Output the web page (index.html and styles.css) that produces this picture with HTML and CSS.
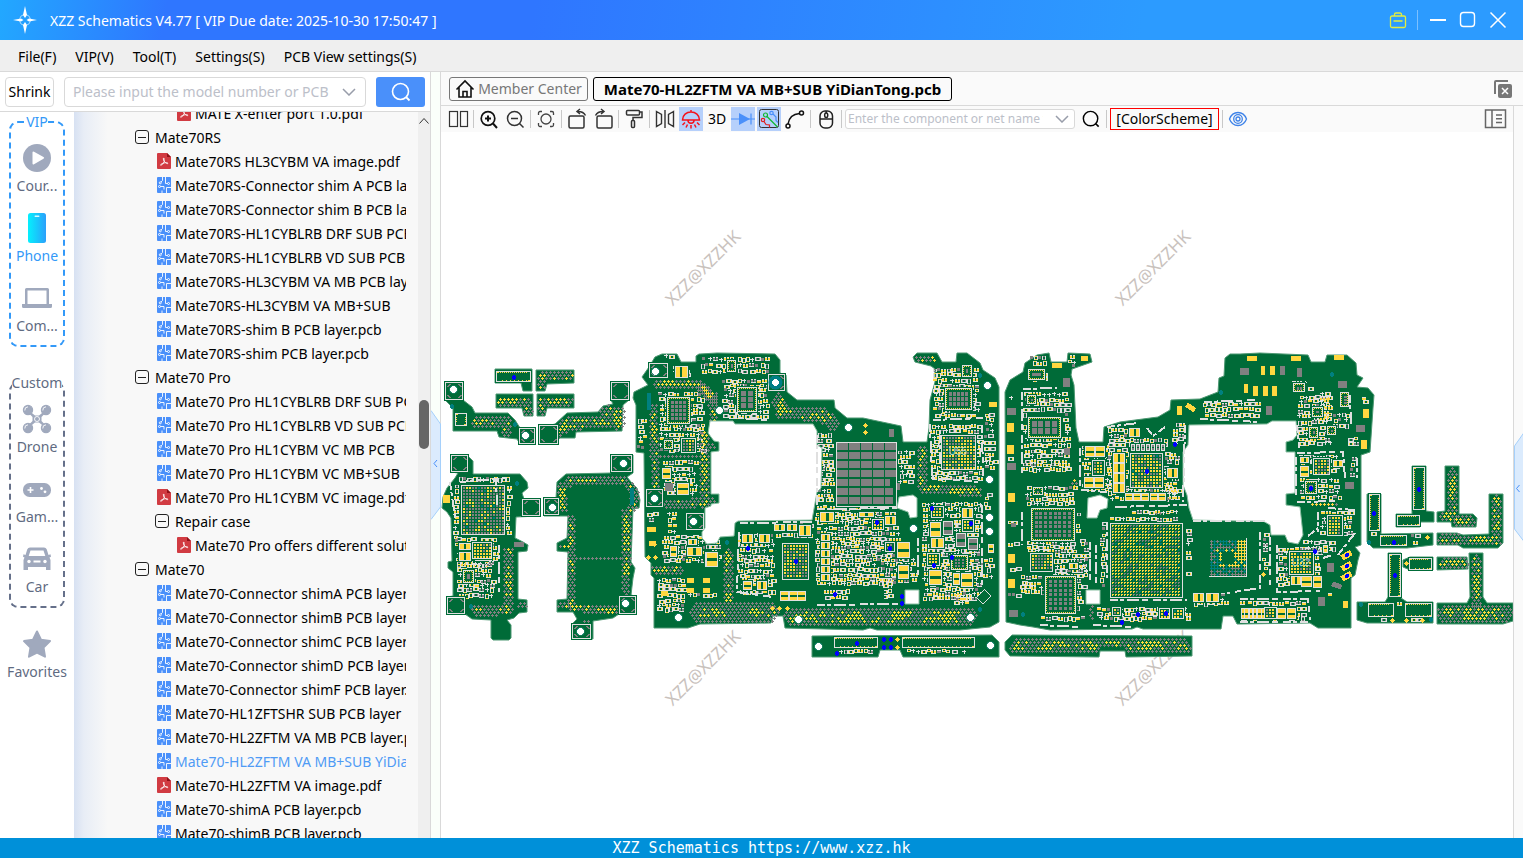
FILE: index.html
```html
<!DOCTYPE html>
<html lang="en">
<head>
<meta charset="utf-8">
<title>XZZ Schematics V4.77</title>
<link rel="stylesheet" href="styles.css">
</head>
<body>
<svg class="sprite" aria-hidden="true">
  <symbol id="i-pcb" viewBox="0 0 14 16">
    <rect width="14" height="16" rx="1" fill="#4a90fa"/>
    <g fill="none" stroke="#fff" stroke-width=".9">
      <path d="M5.500 0v3.500l-1.500 1.500M8.500 0v6.500h2M3.500 9.500h3.500v3M9.500 16v-5.500h4.500M5 16v-2.500"/>
      <circle cx="3.300" cy="5.800" r="1"/><circle cx="11.500" cy="6.500" r="1"/><circle cx="2.500" cy="9.500" r="1"/>
    </g>
  </symbol>
  <symbol id="i-pdf" viewBox="0 0 14 16">
    <path d="M1 0h9l4 4v11a1 1 0 0 1-1 1H1a1 1 0 0 1-1-1V1a1 1 0 0 1 1-1z" fill="#d13b42"/>
    <path d="M10 0l4 4h-4z" fill="#8f1218"/>
    <path d="M6.800 5c-.8 0-.4 2 .4 3.400C6.500 10 5 12.300 3.800 12.300c-1-.3 1-1.900 3.400-2.400 2-.4 3.800-.2 3.700.5-.2.700-2-.1-3.300-1.700C6.900 7.600 7.200 5 6.800 5z" fill="none" stroke="#fff" stroke-width=".9"/>
  </symbol>
  <symbol id="i-search" viewBox="0 0 20 20">
    <circle cx="9.500" cy="9.500" r="8" fill="none" stroke="currentColor" stroke-width="1.600"/>
    <path d="M15 15l3.500 3.500" stroke="currentColor" stroke-width="1.800"/>
  </symbol>
  <symbol id="i-chev" viewBox="0 0 14 8"><path d="M1 1l6 6 6-6" fill="none" stroke="currentColor" stroke-width="1.500"/></symbol>
</svg>

<header class="titlebar">
  <svg class="logo" width="24" height="28" viewBox="0 0 24 28">
    <circle cx="12" cy="14" r="5.500" fill="none" stroke="#a9dcff" stroke-width="1" stroke-dasharray="6 2.600" stroke-dashoffset="-1"/>
    <path d="M12 0l2 9-2 3-2-3zM12 28l2-9-2-3-2 3zM0 14l8-1.500 2.500 1.500L8 15.500zM24 14l-8-1.500-2.500 1.500 2.500 1.500z" fill="#fff"/>
  </svg>
  <h1 class="title">XZZ Schematics V4.77 [ VIP Due date: 2025-10-30 17:50:47 ]</h1>
  <div class="window-tools">
    <button class="win" aria-label="Toolbox"><svg width="18" height="18" viewBox="0 0 18 18" fill="none" stroke="#e3ee3f" stroke-width="1.300"><rect x="1.500" y="5" width="15" height="11.500" rx="1.500"/><path d="M5.500 5V3.500a1.500 1.500 0 0 1 1.500-1.500h4a1.500 1.500 0 0 1 1.500 1.500V5M4.500 10h9"/></svg></button>
    <span class="win-line"></span>
    <button class="win" aria-label="Minimize"><svg width="18" height="18" viewBox="0 0 18 18"><path d="M1 9h16" stroke="#fff" stroke-width="2"/></svg></button>
    <button class="win" aria-label="Maximize"><svg width="18" height="18" viewBox="0 0 18 18"><rect x="1.500" y="1.500" width="14" height="14" rx="3" fill="none" stroke="#fff" stroke-width="1.400"/></svg></button>
    <button class="win" aria-label="Close"><svg width="18" height="18" viewBox="0 0 18 18"><path d="M1.500 1.500l15 15M16.500 1.500l-15 15" stroke="#fff" stroke-width="1.500"/></svg></button>
  </div>
</header>

<nav class="menubar">
  <button>File(F)</button><button>VIP(V)</button><button>Tool(T)</button><button>Settings(S)</button><button>PCB View settings(S)</button>
</nav>

<main class="work">
  <section class="side">
    <form class="finder">
      <button type="button" class="shrink">Shrink</button>
      <div class="combo">
        <input type="text" aria-label="Model number or PCB" placeholder="Please input the model number or PCB">
        <button type="button" class="drop" aria-label="Show history"><svg width="14" height="8"><use href="#i-chev"/></svg></button>
      </div>
      <button type="button" class="go" aria-label="Search"><svg width="20" height="20"><use href="#i-search"/></svg></button>
    </form>
    <div class="side-body">
      <nav class="cats">
        <fieldset class="cat-group vip">
          <legend>VIP</legend>
          <button class="cat"><svg width="30" height="30" viewBox="0 0 30 30"><circle cx="15" cy="15" r="14" fill="#a0a9bd"/><path d="M10.500 9.500v11a1 1 0 0 0 1.500.8l9.500-5.500a1 1 0 0 0 0-1.700L12 8.700a1 1 0 0 0-1.500.8z" fill="#fff"/></svg><span>Cour...</span></button>
          <button class="cat on"><svg width="30" height="30" viewBox="0 0 30 30"><defs><linearGradient id="ph"><stop offset="0" stop-color="#05f0fd"/><stop offset="1" stop-color="#2ba0fb"/></linearGradient></defs><rect x="6" y="0" width="18" height="30" rx="2.500" fill="url(#ph)"/><rect x="12.500" y="2.500" width="5" height="1.500" rx=".7" fill="#d8fbff"/></svg><span>Phone</span></button>
          <button class="cat"><svg width="30" height="30" viewBox="0 0 30 30"><path d="M3 6.500A1.500 1.500 0 0 1 4.500 5h21A1.500 1.500 0 0 1 27 6.500V21h3v2.500a1.500 1.500 0 0 1-1.500 1.500h-27A1.500 1.500 0 0 1 0 23.500V21h3zM5.500 7.500V21h19V7.500z" fill="#a0a9bd" fill-rule="evenodd"/></svg><span>Com...</span></button>
        </fieldset>
        <fieldset class="cat-group custom">
          <legend>Custom</legend>
          <button class="cat"><svg width="30" height="30" viewBox="0 0 30 30" fill="#a0a9bd"><path d="M5 5l8 6.500h4L25 5l.8 1.500L19.500 13v4l6.300 6.500L25 25l-8-6.500h-4L5 25l-.8-1.500L10.500 17v-4L4.200 6.500z"/><g stroke="#a0a9bd" stroke-width="1.200"><circle cx="6" cy="6" r="4.600"/><circle cx="24" cy="6" r="4.600"/><circle cx="6" cy="24" r="4.600"/><circle cx="24" cy="24" r="4.600"/></g><g fill="none" stroke="#fff" stroke-width=".9"><path d="M2.800 6.500A3.400 3.400 0 0 1 6 2.800M20.800 6.500A3.400 3.400 0 0 1 24 2.800M2.800 24.500A3.400 3.400 0 0 1 6 20.800M20.800 24.500A3.400 3.400 0 0 1 24 20.800"/><circle cx="15" cy="15" r="2.500"/></g></svg><span>Drone</span></button>
          <button class="cat"><svg width="30" height="30" viewBox="0 0 30 30"><rect x="1" y="9" width="28" height="14" rx="6.500" fill="#a0a9bd"/><path d="M8.500 13v6M5.500 16h6" stroke="#fff" stroke-width="1.600"/><circle cx="19.500" cy="14.500" r="1.400" fill="#fff"/><circle cx="23" cy="17.800" r="1.400" fill="#fff"/></svg><span>Gam...</span></button>
          <button class="cat"><svg width="30" height="30" viewBox="0 0 30 30"><path d="M8 3.500h14a3 3 0 0 1 2.700 1.800L26.500 11l2-.8.500 2.600-1.500.7 1 2.500V26h-4.500v-3h-18v3H1.500V16l1-2.500-1.500-.7.500-2.600 2 .8 1.800-5.700A3 3 0 0 1 8 3.500zM8.500 6.500L6.700 12h16.600l-1.800-5.500z" fill="#a0a9bd" fill-rule="evenodd"/><circle cx="7" cy="17.500" r="1.700" fill="#fff"/><circle cx="23" cy="17.500" r="1.700" fill="#fff"/><path d="M11.500 17.500h7" stroke="#fff" stroke-width="2"/></svg><span>Car</span></button>
        </fieldset>
        <button class="cat fav"><svg width="30" height="30" viewBox="0 0 30 30"><path d="M15 2.500l4 8.200 9 1.400-6.500 6.400 1.500 9.200-8-4.200-8 4.200 1.500-9.200L2 12.100l9-1.400z" fill="#a0a9bd" stroke="#a0a9bd" stroke-width="2" stroke-linejoin="round"/></svg><span>Favorites</span></button>
      </nav>
      <div class="tree" id="tree"></div>
      <div class="vscroll">
        <svg width="12" height="8" viewBox="0 0 12 8"><path d="M1.500 6.500L6 1.500l4.500 5" fill="none" stroke="#333" stroke-width="1"/></svg>
        <span class="thumb"></span>
      </div>
    </div>
  </section>

  <div class="splitter">
    <button class="handle" aria-label="Collapse left panel"><svg width="10" height="110" viewBox="0 0 10 110"><path d="M0 .5L9.500 14v83L0 109.500" fill="#dbebfd" stroke="#a5d0fb"/><path d="M6 50l-3 3.500L6 57" fill="none" stroke="#4a90fa"/></svg></button>
  </div>

  <section class="viewer">
    <div class="tabs">
      <button class="tab home"><svg width="20" height="20" viewBox="0 0 20 20" fill="none" stroke="#111" stroke-width="1.600"><path d="M1.500 10.500L10 2l8.500 8.500M4 8.500V18h12V8.500M8 18v-5.500h4V18"/></svg><span>Member Center</span></button>
      <button class="tab current">Mate70-HL2ZFTM VA MB+SUB YiDianTong.pcb</button>
      <button class="close-all" aria-label="Close all tabs"><svg width="20" height="20" viewBox="0 0 20 20"><path d="M2 15V3a1 1 0 0 1 1-1h12" fill="none" stroke="#777" stroke-width="2"/><rect x="5" y="5" width="14" height="14" rx="2" fill="#777"/><path d="M9 9l6 6M15 9l-6 6" stroke="#fff" stroke-width="1.500"/></svg></button>
    </div>
    <div class="viewer-body">
      <div class="stage">
        <div class="toolbar">
          <button class="tool" aria-label="Split view"><svg width="24" height="24" viewBox="0 0 24 24" fill="none" stroke="#333" stroke-width="1.200"><rect x="3.500" y="4.500" width="8" height="15"/><rect x="14.500" y="4.500" width="7" height="15"/></svg></button>
          <i class="sep"></i>
          <button class="tool" aria-label="Zoom in"><svg width="24" height="24" viewBox="0 0 24 24" fill="none" stroke="#111" stroke-width="1.700"><circle cx="11" cy="11.500" r="6.800"/><path d="M16 16.500l4 4.500M11 8.500v6M8 11.500h6" stroke-width="2"/></svg></button>
          <button class="tool" aria-label="Zoom out"><svg width="24" height="24" viewBox="0 0 24 24" fill="none" stroke="#333" stroke-width="1.500"><circle cx="11.500" cy="11.500" r="7"/><path d="M16.500 16.500l4 4M8 11.500h7"/></svg></button>
          <i class="sep"></i>
          <button class="tool" aria-label="Fit"><svg width="24" height="24" viewBox="0 0 24 24" fill="none" stroke="#444" stroke-width="1.300"><circle cx="12" cy="12" r="5"/><path d="M4.500 8V6a1.500 1.500 0 0 1 1.500-1.500h2M16 4.500h2A1.500 1.500 0 0 1 19.500 6v2M19.500 16v2a1.500 1.500 0 0 1-1.500 1.500h-2M8 19.500H6A1.500 1.500 0 0 1 4.500 18v-2"/></svg></button>
          <i class="sep"></i>
          <button class="tool" aria-label="Rotate left"><svg width="24" height="24" viewBox="0 0 24 24" fill="none" stroke="#333" stroke-width="1.500"><rect x="4" y="9" width="15" height="12" rx="1.500"/><path d="M12 4.500c4-.3 7 1 8.500 4M15 2l-3 2.500 3 2.500"/></svg></button>
          <button class="tool" aria-label="Rotate right"><svg width="24" height="24" viewBox="0 0 24 24" fill="none" stroke="#333" stroke-width="1.500"><rect x="6" y="9" width="15" height="12" rx="1.500"/><path d="M13 4.500C9 4.200 6 5.500 4.500 8.500M10 2l3 2.500L10 7"/></svg></button>
          <i class="sep"></i>
          <button class="tool" aria-label="Paint"><svg width="24" height="24" viewBox="0 0 24 24" fill="none" stroke="#333" stroke-width="1.500"><rect x="4.500" y="3.500" width="13" height="4.500" rx="1"/><path d="M17.500 5h2.500v5.500h-9v3"/><rect x="9.500" y="13.500" width="3" height="7" rx="1"/></svg></button>
          <i class="sep"></i>
          <button class="tool" aria-label="Mirror"><svg width="24" height="24" viewBox="0 0 24 24" fill="none" stroke="#333" stroke-width="1.400"><path d="M3.500 4.500l5 3v9l-5 3zM20.500 4.500l-5 3v9l5 3zM12 3v18"/></svg></button>
          <button class="tool lit" aria-label="Light"><svg width="24" height="24" viewBox="0 0 24 24" fill="none" stroke="#f5121b" stroke-width="1.500"><path d="M3.500 13c0-5 4-8 8.500-8s8.500 3 8.500 8zM12 3v2M9 13.500c0 3.500 6 3.500 6 0M6 15.500L3.500 18M8.500 17.500L7 20.500M12 18v3.500M15.500 17.500l1.500 3M18 15.500l2.500 2.500"/></svg></button>
          <button class="tool word">3D</button>
          <button class="tool lit" aria-label="Diode"><svg width="24" height="24" viewBox="0 0 24 24"><path d="M0 12h24M20 6.500v11" stroke="#4a90fa" stroke-width="1.200"/><path d="M8 6l11 6-11 6z" fill="#4a90fa"/></svg></button>
          <button class="tool lit" aria-label="Traces"><svg width="24" height="24" viewBox="0 0 24 24" fill="none" stroke-width="1.200"><rect x="2.500" y="2.500" width="19" height="18" rx="2" stroke="#333" stroke-width="1"/><g stroke="#10b830"><circle cx="8.500" cy="8" r="2"/><path d="M10 9.500L20.500 20"/></g><g stroke="#4a90fa"><circle cx="14.500" cy="6" r="1.700"/><path d="M16 7l3 3v3.500l2 2"/></g><g stroke="#e02020"><circle cx="6" cy="13" r="1.700"/><path d="M7 14.500l2 3 3.500.5v2.500"/></g></svg></button>
          <button class="tool" aria-label="Curve"><svg width="24" height="24" viewBox="0 0 24 24" fill="none" stroke="#111" stroke-width="1.500"><circle cx="18.500" cy="6" r="2"/><circle cx="5" cy="19" r="2"/><path d="M16.500 6.500C10 7 6 10.500 5 17"/></svg></button>
          <i class="sep"></i>
          <button class="tool" aria-label="Mouse"><svg width="24" height="24" viewBox="0 0 24 24" fill="none" stroke="#222" stroke-width="1.500"><rect x="6" y="4" width="12.500" height="17" rx="5"/><path d="M6 12h12.500M12.200 4v2"/><rect x="10.700" y="6" width="3" height="4.500" rx="1.500"/></svg></button>
          <i class="sep"></i>
          <div class="combo small">
            <input type="text" aria-label="Component or net name" placeholder="Enter the component or net name to search">
            <button type="button" class="drop" aria-label="Show history"><svg width="14" height="8"><use href="#i-chev"/></svg></button>
          </div>
          <button class="tool find" aria-label="Find"><svg width="20" height="20"><use href="#i-search"/></svg></button>
          <i class="sep"></i>
          <button class="scheme">[ColorScheme]</button>
          <i class="sep"></i>
          <button class="tool" aria-label="Visibility"><svg width="24" height="24" viewBox="0 0 24 24" fill="none" stroke="#3f83e8" stroke-width="1.300"><path d="M3.500 12C5 8 8.500 5.500 12 5.500S19 8 20.500 12c-1.500 4-5 6.500-8.500 6.500S5 16 3.500 12z"/><circle cx="12" cy="12" r="4.300"/><circle cx="12" cy="12" r="2"/></svg></button>
          <button class="tool panel" aria-label="Layer panel"><svg width="24" height="20" viewBox="0 0 24 20" fill="none" stroke="#666" stroke-width="1.500"><rect x="1.500" y="1" width="20" height="17.500"/><path d="M8 1v17.500M12 6h6M12 9.800h6M12 13.500h6"/></svg></button>
        </div>
        <svg class="board" id="board" viewBox="441 132 1072 706" shape-rendering="crispEdges"></svg>
      </div>
      <div class="rail">
        <button class="handle" aria-label="Expand right panel"><svg width="10" height="110" viewBox="0 0 10 110"><path d="M10 .5L.5 14v83l9.500 12.500" fill="#dbebfd" stroke="#a5d0fb"/><path d="M5.500 53l-3 3.500 3 3.500" fill="none" stroke="#4a90fa"/></svg></button>
      </div>
    </div>
  </section>
</main>

<footer class="foot">XZZ Schematics https://www.xzz.hk</footer>
<script src="app.js"></script>
</body>
</html>
```

FILE: styles.css
```css
* { box-sizing: border-box; }
body {
  margin: 0;
  height: 100vh;
  display: flex;
  flex-direction: column;
  overflow: hidden;
  background: #fff;
  color: #000;
  font: 14px/20px "Noto Sans", "Open Sans", sans-serif;
}
button, input {
  font: inherit;
  color: inherit;
  border: 0;
  padding: 0;
  margin: 0;
  background: none;
}
button { display: inline-flex; align-items: center; justify-content: center; }
svg { display: block; flex: none; }
.sprite { position: absolute; width: 0; height: 0; }

.titlebar {
  flex: none;
  height: 40px;
  display: flex;
  align-items: center;
  padding: 0 16px 0 13px;
  color: #fff;
  background: linear-gradient(100deg, #22a8ff 0, #2f76ff 11%, #2f76ff 35%, #2c9bff 75%, #2c9bff 100%);
}
.title { flex: 1; margin: 0 0 0 13px; padding-top: 2px; font-size: 14px; font-weight: 400; }
.window-tools { display: flex; align-items: center; gap: 12px; }
.win { width: 18px; height: 18px; }
.win-line { width: 1px; height: 20px; background: #7cc0ff; margin: 0 -1px 0 -2px; }

.menubar {
  flex: none;
  height: 32px;
  display: flex;
  gap: 19px;
  padding: 2px 18px 0;
  background: #efefef;
  border-bottom: 1px solid #d9d9d9;
}

.work { flex: 1; min-height: 0; display: flex; }
.side { flex: none; width: 431px; display: flex; flex-direction: column; border-right: 1px solid #d9d9d9; }
.finder {
  flex: none;
  height: 40px;
  display: flex;
  align-items: center;
  padding: 0 5px;
  border-bottom: 1px solid #d9d9d9;
}
.shrink { width: 49px; height: 30px; border: 1px solid #d9d9d9; border-radius: 4px; }
.combo {
  display: flex;
  align-items: center;
  height: 30px;
  width: 302px;
  margin: 0 10px;
  padding: 0 9px 0 8px;
  border: 1px solid #d9d9d9;
  border-radius: 4px;
  background: #fff;
}
.combo input { flex: 1; min-width: 0; outline: 0; }
.combo input::placeholder { color: #bcc0c9; opacity: 1; }
.drop { width: 14px; margin-left: 4px; color: #989daa; }
.go { width: 49px; height: 30px; border-radius: 3px; background: #4a90fa; color: #fff; }
.side-body { flex: 1; min-height: 0; display: flex; }

.cats { flex: none; width: 74px; overflow: hidden; color: #5f6b82; }
.cat-group { min-width: 0; margin: 0 9px 26px; padding: 0 0 3px; border: 2px dashed; border-radius: 9px; }
.cat-group legend { margin: 0 auto; padding: 0; line-height: 20px; }
.vip { border-color: #3399f8; }
.vip legend { color: #3399f8; }
.custom { border-color: #65708a; }
.cat { display: flex; flex-direction: column; width: 100%; height: 70px; padding-top: 11px; justify-content: flex-start; gap: 3px; white-space: nowrap; }
.on { color: #3399f8; }
.fav { margin-top: -16px; }

.tree {
  flex: 1;
  min-width: 0;
  overflow: hidden;
  padding-right: 12px;
  background: linear-gradient(90deg, #d7e1f2 0, #e8edf6 10px, #f8f8f8 34px);
}
.tree ul { list-style: none; margin: 0; padding: 0 0 0 20px; }
.tree > ul { margin-top: -11px; padding-left: 61px; }
.tree a, .tree .node { display: flex; align-items: center; height: 24px; color: inherit; text-decoration: none; white-space: nowrap; overflow: hidden; }
.tree a { margin-left: 2px; gap: 4px; }
.tree .node { gap: 6px; }
.tree span { padding-top: 2px; }
.tree .picked { color: #4f9bf5; }
.fold { width: 14px; height: 14px; border: 1px solid #222; border-radius: 3px; }
.fold::before { content: ""; width: 8px; height: 1px; background: #222; }
.vscroll { flex: none; width: 12px; background: #efefef; position: relative; padding-top: 5px; }
.thumb { position: absolute; top: 41%; left: 1px; right: 1px; margin-top: -10px; height: 49px; border-radius: 5px; background: #666; }

.splitter { flex: none; width: 10px; position: relative; background: #fafffa; border-right: 1px solid #d9d9d9; }
.handle { position: absolute; left: 0; z-index: 2; }
.splitter .handle { top: 338px; }
.rail .handle { top: 326px; }

.viewer { flex: 1; min-width: 0; display: flex; flex-direction: column; }
.tabs {
  flex: none;
  height: 34px;
  display: flex;
  align-items: center;
  gap: 5px;
  padding: 0 10px 0 8px;
  background: #fafafa;
  border-bottom: 1px solid #d9d9d9;
}
.tab { height: 24px; border: 1px solid #777; border-radius: 3px; background: #fafafa; }
.home { color: #777; padding: 0 5px; gap: 3px; width: 139px; }
.current { border-color: #000; color: #000; font-size: 15px; font-weight: 700; width: 359px; }
.close-all { margin-left: auto; }
.viewer-body { flex: 1; min-height: 0; display: flex; }
.stage { flex: 1; min-width: 0; display: flex; flex-direction: column; }
.toolbar { flex: none; height: 26px; display: flex; align-items: center; gap: 2px; padding: 0 5px; background: #fafafa; }
.tool { flex: none; width: 24px; height: 24px; }
.lit { background: #b6d0fb; }
.sep { flex: none; width: 3px; height: 18px; background: linear-gradient(90deg, transparent 1px, #c8c8c8 1px, #c8c8c8 2px, transparent 2px); }
.combo.small { width: 230px; height: 20px; margin: 0; padding: 0 5px 0 2px; font-size: 12px; border-radius: 3px; }
.small .drop { margin-left: 12px; }
.find { margin-left: 2px; }
.find svg { width: 18px; height: 18px; }
.scheme { width: 109px; height: 22px; border: 1px solid #f00; }
.panel { margin-left: auto; }
.board { flex: 1; min-height: 0; width: 100%; }
.rail { flex: none; width: 10px; position: relative; background: #fafafa; border-left: 1px solid #d9d9d9; }

.watermark { font: 17px "Noto Sans", sans-serif; fill: #c9c2bd; text-anchor: middle; }
.refdes { font: 10px "Liberation Sans", sans-serif; fill: #b8d8d0; text-anchor: middle; }

.foot {
  flex: none;
  height: 20px;
  background: #0090d9;
  color: #fff;
  text-align: center;
  font: 15px/20px "DejaVu Sans Mono", monospace;
}
```

FILE: app.js
```js
/* ---------- file tree ---------- */
const files = [
  { deep: ["MATE X-enter port 1.0.pdf"] },
  { name: "Mate70RS", items: [
    "Mate70RS HL3CYBM VA image.pdf",
    "Mate70RS-Connector shim A PCB layer.pcb",
    "Mate70RS-Connector shim B PCB layer.pcb",
    "Mate70RS-HL1CYBLRB DRF SUB PCB layer.pcb",
    "Mate70RS-HL1CYBLRB VD SUB PCB layer.pcb",
    "Mate70RS-HL3CYBM VA MB PCB layer.pcb",
    "Mate70RS-HL3CYBM VA MB+SUB",
    "Mate70RS-shim B PCB layer.pcb",
    "Mate70RS-shim PCB layer.pcb"] },
  { name: "Mate70 Pro", items: [
    "Mate70 Pro HL1CYBLRB DRF SUB PCB layer.pcb",
    "Mate70 Pro HL1CYBLRB VD SUB PCB layer.pcb",
    "Mate70 Pro HL1CYBM VC MB PCB",
    "Mate70 Pro HL1CYBM VC MB+SUB",
    "Mate70 Pro HL1CYBM VC image.pdf",
    { name: "Repair case", items: ["Mate70 Pro offers different solutions.pdf"] }] },
  { name: "Mate70", items: [
    "Mate70-Connector shimA PCB layer.pcb",
    "Mate70-Connector shimB PCB layer.pcb",
    "Mate70-Connector shimC PCB layer.pcb",
    "Mate70-Connector shimD PCB layer.pcb",
    "Mate70-Connector shimF PCB layer.pcb",
    "Mate70-HL1ZFTSHR SUB PCB layer",
    "Mate70-HL2ZFTM VA MB PCB layer.pcb",
    "Mate70-HL2ZFTM VA MB+SUB YiDianTong.pcb",
    "Mate70-HL2ZFTM VA image.pdf",
    "Mate70-shimA PCB layer.pcb",
    "Mate70-shimB PCB layer.pcb"] }
];
const current = "Mate70-HL2ZFTM VA MB+SUB YiDianTong.pcb";
function branch(list) {
  return "<ul>" + list.map(n => {
    if (n.deep) return "<li><ul><li>" + branch(n.deep) + "</li></ul></li>";
    if (n.name) return `<li><div class="node"><button class="fold" aria-label="Fold ${n.name}"></button><span>${n.name}</span></div>${branch(n.items)}</li>`;
    const icon = n.endsWith(".pdf") ? "i-pdf" : "i-pcb";
    return `<li><a href="#"${n === current ? ' class="picked"' : ""}><svg width="14" height="16"><use href="#${icon}"/></svg><span>${n}</span></a></li>`;
  }).join("") + "</ul>";
}
document.getElementById("tree").innerHTML = branch(files);

/* ---------- board drawing ---------- */
const C = { green: "#006b38", white: "#e0e0e0", gray: "#808080", teal: "#008080", yellow: "#ffd740", blue: "#0000ff" };
const order = ["green", "white", "gray", "teal", "yellow", "blue"];
const levels = [{}, {}, {}, {}];
let seed = 7, off = 0, shapes = "", holes = "", extra = "";
const rnd = () => (seed = (seed * 16807) % 2147483647) / 2147483647;
const X = v => Math.round((v + off) / 3) + 440;
const Y = v => Math.round(v / 3) + 345;
const S = v => Math.max(1, Math.round(v / 3));
function px(l, c, x, y, w, h) { levels[l][c] = (levels[l][c] || "") + `M${x} ${y}h${w}v${h}h${-w}z`; }
function frame(l, c, x, y, w, h) { px(l, c, x, y, w, 1); px(l, c, x, y + h - 1, w, 1); px(l, c, x, y + 1, 1, h - 2); px(l, c, x + w - 1, y + 1, 1, h - 2); }
const poly = p => p.trim().split(/\s+/).map(s => { const [a, b] = s.split(",").map(Number); return [X(a), Y(b)]; });
function board(...parts) {
  let pts = [];
  parts.forEach(([o, p]) => { off = o; pts = pts.concat(poly(p)); });
  shapes += `<polygon points="${pts.join(" ")}" fill="${C.green}" stroke="#4d9872" stroke-width="1" stroke-linejoin="round" shape-rendering="auto"/>`;
}
function cut(...parts) {
  let pts = [];
  parts.forEach(([o, p]) => { off = o; pts = pts.concat(poly(p)); });
  holes += `<polygon points="${pts.join(" ")}" fill="#fff" stroke="#8abfa2" stroke-width="1" stroke-linejoin="round" shape-rendering="auto"/>`;
}
const each = (a, f) => a.forEach(v => f(...v));
function dist(x, y, a, b) {
  const dx = b[0] - a[0], dy = b[1] - a[1], q = dx * dx + dy * dy || 1;
  const t = Math.max(0, Math.min(1, ((x - a[0]) * dx + (y - a[1]) * dy) / q));
  return Math.hypot(x - a[0] - t * dx, y - a[1] - t * dy);
}
/* stitched vias along a polyline; gold clusters run through the middle of the band */
function mesh(path, width, gold = 0.6) {
  const p = poly(path), r = width / 6;
  const xs = p.map(v => v[0]), ys = p.map(v => v[1]);
  let row = 0;
  for (let y = Math.floor((Math.min(...ys) - r) / 3) * 3; y <= Math.max(...ys) + r; y += 3) {
    row++;
    for (let x = Math.floor((Math.min(...xs) - r) / 4) * 4 + (row % 2) * 2; x <= Math.max(...xs) + r; x += 4) {
      let d = 1e9;
      for (let i = 0; i < p.length; i++) d = Math.min(d, dist(x, y, p[i], p[Math.min(i + 1, p.length - 1)]));
      if (d > r) continue;
      const wave = 0.5 + 0.5 * Math.sin(x * 0.13 + y * 0.17);
      const c = d < r * 0.6 && rnd() < gold * (0.35 + wave) ? "yellow" : "gray";
      px(1, c, x - 1, y, 3, 1); px(1, c, x, y - 1, 1, 1); px(1, c, x, y + 1, 1, 1);
    }
  }
}
/* dense small passives in uneven rows */
function chips(x, y, w, h) {
  const x0 = X(x), y0 = Y(y), x1 = X(x + w), y1 = Y(y + h);
  for (let b = y0; b < y1 - 3;) {
    const rh = 4 + Math.floor(rnd() * 3);
    for (let a = x0 + Math.floor(rnd() * 3); a < x1 - 3;) {
      const k = rnd(), c = rnd() < 0.74 ? "yellow" : "gray", j = Math.floor(rnd() * 2), t = b + j;
      if (k < 0.08) { a += 2; continue; }
      if (k < 0.32) {
        frame(1, "white", a, t, 6, 4); px(1, c, a + 1, t + 1, 1, 2); px(1, c, a + 4, t + 1, 1, 2); a += 6;
      } else if (k < 0.52) {
        px(1, "white", a, t, 2, 1); px(1, "white", a + 3, t, 2, 1); px(1, "white", a, t + 3, 5, 1);
        px(1, c, a, t + 1, 2, 2); px(1, c, a + 3, t + 1, 2, 2); a += 6;
      } else if (k < 0.76) {
        px(1, "white", a, t, 1, rh - 1); px(1, "white", a + 3, t, 1, rh - 1);
        px(1, c, a + 1, t, 2, 1); px(1, c, a + 1, t + rh - 2, 2, 1); a += 4;
      } else if (k < 0.88) { px(1, "white", a, t + 1, 4, 1); px(1, "white", a + 2, t, 1, 4); a += 5; }
      else if (k < 0.95) { px(1, "white", a, t, 4, 1); px(1, c, a, t + 1, 4, 2); a += 5; }
      else { px(1, "gray", a, t, 3, 3); a += 4; }
    }
    b += rh;
  }
}
function body(x, y, w, h) { px(2, "green", X(x) - 1, Y(y) - 1, S(w) + 2, S(h) + 2); frame(3, "white", X(x), Y(y), S(w), S(h)); }
function bga(x, y, w, h, mix = 0.5, second = "gray") {
  body(x, y, w, h);
  const fine = mix >= 0.6 && w > 120;
  for (let b = Y(y) + 2; b < Y(y) + S(h) - 2; b += 3)
    for (let a = X(x) + 2; a < X(x) + S(w) - 2; a += 3) {
      const wave = 0.5 + 0.5 * Math.sin(a * 0.21) * Math.sin(b * 0.17);
      const k = rnd();
      const c = k < mix * (0.6 + wave * 0.7) ? "yellow" : k < 0.97 ? second : "teal";
      px(3, c, a, b, 2, fine ? 1 : 2);
      if (fine) px(3, c, a, b + 1, 1, 1);
    }
}
/* package with square thermal pads and pins round the edge */
function qfn(x, y, w, h, nx, ny) {
  body(x, y, w, h);
  const a = X(x), b = Y(y), W = S(w), H = S(h);
  for (let i = 2; i < W - 2; i += 2) { px(3, "yellow", a + i, b + 1, 1, 1); px(3, "yellow", a + i, b + H - 2, 1, 1); }
  for (let i = 2; i < H - 2; i += 2) { px(3, "yellow", a + 1, b + i, 1, 1); px(3, "yellow", a + W - 2, b + i, 1, 1); }
  const cw = (W - 6) / nx, ch = (H - 6) / ny;
  const pw = Math.max(2, Math.floor(cw - 1.2)), ph = Math.max(2, Math.floor(ch - 1.2));
  for (let i = 0; i < nx; i++) for (let j = 0; j < ny; j++)
    px(3, "gray", a + 4 + Math.floor(i * cw), b + 4 + Math.floor(j * ch), pw, ph);
}
function conn(x, y, w, h) {
  body(x, y, w, h);
  const a = X(x), b = Y(y), W = S(w), H = S(h);
  if (W > H) for (let i = 4; i < W - 4; i += 2) { px(3, "yellow", a + i, b + 1, 1, 1); if (i % 4) px(3, "yellow", a + i, b + H - 2, 1, 1); }
  else for (let i = 4; i < H - 4; i += 2) { px(3, "yellow", a + 1, b + i, 1, 1); px(3, "yellow", a + W - 2, b + i, 1, 1); }
  px(3, "yellow", a + 1, b + 1, 2, 1); px(3, "yellow", a + W - 3, b + H - 2, 2, 1);
}
function cap(x, y, w, h, c = "yellow") {
  body(x, y, w, h);
  const a = X(x) + 1, b = Y(y) + 1, W = S(w) - 2, H = S(h) - 2;
  px(2, c, a, b, W, H);
  if (W > H) px(3, "green", a + Math.round(W * 0.4), b, Math.max(1, Math.round(W * 0.22)), H);
  else px(3, "green", a, b + Math.round(H * 0.4), W, Math.max(1, Math.round(H * 0.22)));
}
const pad = (x, y, w, h, c = "yellow") => px(2, c, X(x), Y(y), S(w), S(h));
function corner(x, y, w, h) {
  body(x, y, w, h);
  const a = X(x), b = Y(y), W = S(w), H = S(h);
  [[2, 2, 1], [W - 5, 2, -1], [2, H - 5, -1], [W - 5, H - 5, 1]].forEach(([i, j, s]) => {
    for (let k = 0; k < 3; k++) px(3, "gray", a + i + k, b + j + (s > 0 ? 2 - k : k), 2, 1);
  });
}
function dot(x, y, c = "blue") { const a = X(x), b = Y(y); px(3, c, a - 2, b - 1, 4, 3); px(3, c, a - 1, b - 2, 2, 5); }
function screw(x, y, r = 4) {
  const a = X(x), b = Y(y);
  extra += `<circle cx="${a + 0.5}" cy="${b + 0.5}" r="${r}" fill="${r > 4 ? "#007f86" : "#2c8f80"}" shape-rendering="auto"/><path d="M${a - 1} ${b - 3}h3v1h1v1h1v3h-1v1h-1v1h-3v-1h-1v-1h-1v-3h1v-1h1z" fill="#fff"/>`;
}
function diamond(x, y) { const a = X(x), b = Y(y); px(2, "yellow", a - 2, b, 5, 1); px(2, "yellow", a - 1, b - 1, 3, 1); px(2, "yellow", a - 1, b + 1, 3, 1); px(2, "yellow", a, b - 2, 1, 1); px(2, "yellow", a, b + 2, 1, 1); }
function silk(path) { extra += `<polyline points="${poly(path).join(" ")}" fill="none" stroke="${C.white}" stroke-width="2" stroke-dasharray="8 2 4 3 12 3 6 5"/>`; }

/* outlines */
board([0, "14,112 66,112 70,165 95,185 105,203 205,203 225,225 240,248 285,250 285,297 240,297 232,282 178,276 172,258 38,258 38,190 14,165"]);
board([0, "166,73 277,73 277,138 250,138 244,114 166,114"]);
board([0, "289,74 402,74 402,114 320,116 316,138 289,138"]);
board([0, "167,148 278,148 278,212 252,212 247,189 167,189"]);
board([0, "290,148 403,148 403,188 322,190 316,213 290,213"]);
board([0, "514,110 568,110 568,165 550,180 546,258 408,262 404,279 352,280 350,297 296,297 296,248 345,236 380,205 475,202 490,182 520,178 514,165"]);
board([0, "33,330 82,330 98,348 100,388 240,388 260,410 264,430 245,445 252,462 298,462 298,513 228,515 225,580 248,592 264,600 262,618 235,622 235,762 262,765 262,800 238,803 222,820 200,824 214,840 214,880 208,885 158,885 152,880 152,824 96,822 76,808 22,806 22,756 38,752 40,680 25,668 25,652 36,648 32,520 22,500 5,490 8,455 20,428 44,400 54,384 33,380"]);
board([0, "513,330 578,330 578,385 560,395 574,410 590,430 600,465 598,488 578,492 574,650 586,668 580,700 574,750 586,752 586,808 536,808 520,820 458,828 458,883 396,883 396,837 410,822 398,802 350,802 350,764 382,762 384,622 350,618 352,594 382,580 384,514 312,512 312,460 348,458 350,410 378,386 513,385"]);
board([0, "645,36 665,28 712,28 722,52 768,52 768,32 776,28"],
  [780, "0,28 50,24 225,28 240,45 240,85 258,90 260,140 290,165 402,165 405,190 440,218 490,220 602,242 608,292 680,292 686,250 690,165 706,110 705,72 692,62 645,50 640,35 650,25 712,25 725,50 768,50 770,25 800,25 840,55 850,75 885,100 898,125 898,830 870,845 780,855 530,855 510,848 490,855 255,850 250,812 218,812 212,835 0,838"],
  [0, "745,850 643,850 643,700 632,690 632,655 615,635 613,325 588,322 588,180 578,160 583,140 625,120 605,95 628,65"]);
board([780, "335,872 875,870 898,892 898,935 610,935 600,915 540,915 535,935 335,935"]);
board([1680, "15,140 30,105 68,80 75,55 110,30 148,25 152,50 200,50 205,25 270,27 276,52 215,72 212,90 222,120 228,250 236,290 308,292 312,245 360,232 475,215 510,195 512,165 600,163 655,140 658,100 672,92 675,40 690,27 720,27"],
  [2400, "60,25 205,30 212,52 255,52 262,30 320,30 348,55 352,90 370,98 350,125 385,130 402,150 400,190 390,320 362,330 362,600 345,605 360,625 355,645 345,690 332,700 332,850 235,850 210,835 0,838"],
  [1680, "710,838 700,812 668,812 662,852 430,852 410,845 395,852 150,855 100,845 60,840 18,830"]);
board([1680, "14,890 35,870 575,872 575,933 378,935 374,917 300,917 296,935 30,932 14,915"]);
board([2400, "516,363 558,363 558,498 582,500 582,530 540,532 540,546 468,546 468,508 516,506"]);
board([2400, "614,362 658,362 658,506 700,507 710,520 708,547 635,547 632,530 592,530 592,500 614,498"]);
board([2400, "382,446 423,446 423,566 580,564 580,600 500,608 400,608 382,590"]);
board([2400, "746,446 789,446 789,595 775,608 670,608 655,600 592,600 592,564 650,564 670,570 746,568"]);
board([2400, "444,624 484,624 484,760 500,772 580,772 580,835 380,835 350,825 350,772 435,770 444,755"]);
board([2400, "490,645 510,635 580,637 580,676 510,676 490,665"]);
board([2400, "592,636 680,636 684,672 592,676"]);
board([2400, "688,624 730,624 730,755 740,773 818,773 818,828 790,836 592,836 592,773 680,773 690,755"]);

cut([780, "30,228 100,228 105,236 340,238 350,258 352,300 365,310 363,430 350,440 335,525 115,527 104,535 102,573 60,575 50,595 20,598 5,580 5,560 15,550 14,490 32,484 32,478 56,475 56,448 32,446 32,322 56,318 56,290 42,288 25,265"]);
cut([780, "598,455 640,450 652,460 650,515 630,518 625,500 590,490"]);
cut([780, "616,735 658,735 658,778 616,778"]);
cut([2400, "95,228 168,228 170,270 160,285 138,292 138,320 165,322 165,445 138,448 138,480 180,485 190,570 175,598 145,590 135,570 92,570 90,540 70,528 0,528"],
  [1680, "580,525 568,490 560,450 548,420 550,320 565,300 568,240 800,238"]);
cut([1680, "265,458 300,450 325,462 322,490 300,495 290,520 262,518"]);
cut([1680, "257,735 300,735 300,778 257,778"]);

/* left sub-boards */
off = 0;
each([[14,112,54,54],[238,248,48,48],[514,110,54,54],[296,240,56,58],[33,330,50,52],[245,462,54,50],[513,330,64,52],[312,460,44,52],[22,756,54,50],[536,752,50,54],[396,837,58,46],[628,55,58,44],[618,433,52,54],[738,505,54,50]], corner);
each([["108,230 198,228 194,262",30],["303,93 390,93",24],["303,95 303,122",20],["180,168 262,168 264,198",24],["303,198 303,168 390,168",24],["350,262 385,235 500,232",38],["500,200 530,205 530,232",44,.9],["204,622 204,792 110,795",34],["240,780 250,780",20,.1],["365,490 362,430 390,405 545,405",28],["570,420 582,440 580,480 558,500 556,735",28],["393,520 393,785 530,796",26],["364,604 380,604",16,.2],["364,780 380,780",20,.2],["412,640 540,640",6,0],["430,824 450,824",10,0],
  ["638,190 645,420",26],["650,115 770,118 815,150 820,220",28],["792,270 792,470 680,476",28],["812,300 818,300",14,.3],["812,462 818,462",14,.3],["660,335 790,335",8,0],["645,672 715,672",28],["775,800 990,800",56,.4]], mesh);
conn(168,77,106,34); dot(222,96); conn(44,204,36,38);
chips(50,396,165,24); chips(38,420,20,180); chips(196,420,24,160); chips(45,575,130,85); chips(50,655,115,105);
bga(62,420,132,150,.3); bga(96,590,60,50,1); cap(58,594,36,20); cap(58,620,36,26); qfn(68,674,34,38,1,1);
pad(10,450,22,24); pad(222,590,30,16,"gray");
chips(655,140,140,190); chips(590,220,30,95); chips(670,345,105,112); chips(680,500,40,65); chips(620,500,30,40); chips(665,570,175,85); chips(650,700,90,110); chips(745,745,90,24); chips(700,60,50,40); chips(670,28,40,24);
qfn(682,155,68,82,4,5); bga(722,280,46,44,.4); qfn(672,285,28,26,1,1); cap(666,370,26,34); cap(710,415,36,36); pad(676,415,24,24,"gray"); cap(704,62,40,36); pad(620,545,26,16); pad(628,588,20,16);
diamond(625,635); diamond(646,635); diamond(642,597);
each([[740,700,22,14],[788,700,22,14],[740,730,22,14],[788,730,22,14],[662,738,22,14]], (x, y, w, h) => pad(x, y, w, h));
cap(744,582,28,18); cap(690,602,22,32); cap(740,606,46,28); cap(798,622,36,44);
silk("168,400 172,480"); silk("176,600 176,740"); silk("30,410 44,520"); silk("60,410 200,400");
each([[40,132],[256,271],[550,355],[337,487],[556,775],[421,857],[646,79],[643,460],[760,529],[715,817]], (x, y) => screw(x, y));
each([[37,182],[224,238],[232,414],[92,784]], (x, y) => dot(x, y, "teal"));
pad(622,145,12,50,"teal"); pad(570,430,12,50,"teal");

/* main board, front */
off = 780;
each([["85,625 85,770",28],["5,125 40,165",30],["10,265 10,480",22],["235,165 245,200 365,208 400,235",42],["275,815 805,812",50,.45],["665,315 668,430 830,437",30],["650,38 700,42",20,1]], mesh);
chips(0,36,215,60); chips(65,102,148,118); chips(355,265,48,210); chips(595,315,50,100); chips(700,70,140,155); chips(690,238,160,175); chips(852,205,38,170);
chips(345,500,255,232); chips(370,732,80,32); chips(115,565,112,195); chips(222,535,115,55); chips(665,470,180,308); chips(590,640,60,70); chips(760,745,55,36); chips(850,640,36,70); chips(350,480,210,16); chips(545,700,40,60); chips(852,440,20,60);
qfn(110,125,60,75,2,3); qfn(80,45,28,36,1,1); qfn(735,128,80,65,5,3); bga(722,270,104,104,.55); qfn(785,60,30,36,1,1);
px(2, "green", X(406), Y(290), 61, 66); frame(3, "white", X(407), Y(291), 61, 65);
for (let i = 0; i < 5; i++) for (let j = 0; j < 7; j++) px(3, "gray", X(410 + i * 36), Y(294 + j * 27), i === 4 && j > 3 ? (j === 4 ? 5 : 8) : 11, 7);
pad(588,415,12,22,"gray"); pad(567,252,14,24,"gray");
bga(247,593,82,112,.65); qfn(752,630,50,46,3,3); bga(692,484,40,36,1); bga(682,625,40,40,1); bga(516,522,36,32,1); bga(555,590,30,30,.2); bga(787,522,36,40,1);
for (let i = 0; i < 6; i++) cap(362, 566 + i * 24, 26, 20);
each([[360,502,42,30],[592,590,38,48],[595,660,34,42],[127,567,32,28],[178,567,32,28],[222,537,34,22],[262,537,30,22],[298,540,36,32],[690,530,34,46],[692,580,40,30],[782,683,36,42],[760,685,20,36],[686,675,38,46],[787,488,34,30],[555,514,32,26],[478,502,44,14],[128,708,26,28],[172,708,30,28],[240,737,26,30],[266,737,26,30],[292,737,26,30],[16,622,38,44],[864,596,18,26]], (x, y, w, h) => cap(x, y, w, h));
each([[768,565,30,42],[730,527,30,42],[805,580,30,36]], (x, y, w, h) => cap(x, y, w, h, "gray"));
each([[8,700,22,14],[8,730,22,14],[866,170,24,14]], (x, y, w, h) => pad(x, y, w, h));
px(2, "green", X(455), Y(735), 32, 12);
conn(403,877,132,32); conn(605,875,220,32); chips(410,911,120,20); chips(620,911,180,20);
each([[496,241],[496,262],[217,790],[238,790],[260,790],[592,881],[592,906]], diamond);
silk("110,200 105,220 205,225"); silk("352,780 600,777"); silk("120,534 340,530"); silk("350,492 590,488"); silk("690,238 695,400 840,412"); silk("700,225 850,220"); silk("655,580 655,690"); silk("845,240 848,400"); silk("116,560 112,740 220,755"); silk("845,480 845,720"); silk("352,270 352,480"); silk("720,270 720,370");
each([[58,196],[445,247],[862,121],[868,403],[868,515],[868,558],[640,550],[295,823],[811,817],[355,903],[871,901]], (x, y) => screw(x, y));
corner(203, 88, 50, 50);
screw(226, 112, 7);
each([[145,608],[288,648],[404,747],[531,531],[570,608],[605,752],[605,774],[696,490],[812,534],[756,636],[702,660],[471,893],[411,924],[552,881],[573,881],[552,906],[573,906]], (x, y) => dot(x, y));
each([[80,590],[840,90],[840,792]], (x, y) => dot(x, y, "teal"));
extra += `<rect x="${X(853) - 6}" y="${Y(757) - 5}" width="12" height="9" transform="rotate(-45 ${X(853)} ${Y(757)})" fill="${C.green}" stroke="${C.white}"/><text class="refdes" x="${X(775)}" y="${Y(331)}">U55</text>`;

/* main board, back */
off = 1680;
mesh("50,902 280,902", 44, .6); mesh("290,892 380,892", 34, .2); mesh("390,902 550,902", 44, .6); mesh("222,400 222,425", 12, 1); mesh("272,785 272,820", 10, 1); mesh("462,500 490,500", 8, 1);
chips(90,34,55,28); chips(205,28,32,40); chips(80,70,60,38); chips(68,140,145,70); chips(68,275,145,115); chips(68,205,16,75); chips(190,205,24,75); chips(75,422,155,62); chips(80,588,155,40); chips(75,690,60,60); chips(160,625,108,70); chips(228,490,14,90); chips(120,812,140,26); chips(228,700,30,100); chips(20,150,26,26); chips(20,335,28,20); chips(20,528,44,20); chips(20,592,40,20); chips(20,665,40,24); chips(20,745,40,24); chips(60,690,20,60);
chips(245,300,92,140); chips(322,250,65,220); chips(385,280,120,42); chips(490,320,50,150); chips(515,235,36,70); chips(375,430,170,45); chips(390,495,150,22); chips(330,516,215,16); chips(290,785,290,55); chips(300,530,18,200); chips(558,550,16,180); chips(575,740,110,48); chips(785,550,20,60); chips(785,635,20,40); chips(610,172,175,52); chips(240,580,26,120);
qfn(85,215,100,62,4,2); qfn(93,488,132,98,8,6); qfn(135,693,92,115,5,7); bga(90,625,68,58,.6); qfn(82,150,26,26,1,1); qfn(100,425,30,24,1,1); qfn(84,72,50,32,1,1);
bga(330,533,218,224,.75); bga(390,325,100,106,.7); bga(275,345,40,48,.8); bga(478,790,34,32,1); bga(515,790,36,32,1); bga(335,785,28,26,.4);
for (let i = 0; i < 4; i++) cap(340, 325 + i * 30, 36, 30);
for (let i = 0; i < 5; i++) cap(374 + i * 25, 445, 24, 24);
for (let i = 0; i < 7; i++) cap(392 + i * 15, 297, 13, 22, "gray");
each([[256,303,30,34],[286,303,30,34],[252,397,30,34],[282,397,30,34],[386,250,34,26],[500,370,32,30],[580,745,32,26],[617,745,38,26],[722,790,24,32],[746,790,24,32],[770,790,24,32],[206,655,28,18]], (x, y, w, h) => cap(x, y, w, h));
each([[20,233,20,28],[20,300,20,28],[23,445,20,26],[23,627,20,26],[23,702,20,26],[155,55,30,14],[242,33,22,14],[742,33,28,14],[783,63,13,28],[733,118,13,28],[760,122,14,30],[788,122,14,30],[530,183,14,28]], (x, y, w, h) => pad(x, y, w, h));
each([[188,100,20,26],[22,190,26,20],[20,355,26,20],[28,795,26,20],[720,68,26,22],[192,310,18,20],[32,535,16,12]], (x, y, w, h) => pad(x, y, w, h, "gray"));
extra += `<rect x="${X(572) - 5}" y="${Y(187) - 2}" width="10" height="5" transform="rotate(35 ${X(572)} ${Y(187)})" fill="${C.yellow}"/>`;
for (let j = 0; j < 12; j++) for (let i = 0; i < 12; i++) {
  if (i > 3 && i < 8 && j > 3 && j < 8) continue;
  const c = i > 8 && j < 7 ? "yellow" : j > 8 || j < 3 || i < 2 ? (rnd() < .6 ? "gray" : "teal") : rnd() < .4 ? "yellow" : "teal";
  const a = X(632) + i * 3, b = Y(587) + j * 3;
  px(3, c, a - 1, b, 3, 1); px(3, c, a, b - 1, 1, 1); px(3, c, a, b + 1, 1, 1);
}
extra += `<path d="M${X(737)} ${Y(580)}V${Y(692)}H${X(627)}" fill="none" stroke="${C.white}"/>`;
silk("66,140 66,390"); silk("70,132 170,130"); silk("322,245 415,235"); silk("240,310 240,435 320,440"); silk("320,530 320,700"); silk("560,480 340,485"); silk("555,240 550,470"); silk("580,528 800,528"); silk("288,600 288,720"); silk("330,765 560,765"); silk("600,222 780,230"); silk("270,590 270,720"); silk("280,840 400,845"); silk("65,500 65,600"); silk("780,560 780,730 680,745"); silk("440,250 460,272 495,245"); silk("120,840 240,845"); silk("612,170 770,165");
each([[525,296],[441,377],[366,831],[413,808],[498,803]], (x, y) => dot(x, y));
each([[70,808],[664,142]], (x, y) => dot(x, y, "teal"));
diamond(790,688);

/* right part and small flexes */
off = 2400;
chips(150,108,52,38); chips(205,125,30,20); chips(172,150,105,160); chips(240,140,40,90); chips(275,205,54,50); chips(300,138,28,58); chips(320,275,40,35); chips(365,152,24,26);
chips(176,330,125,66); chips(180,400,125,68); chips(330,335,22,60); chips(240,497,108,85); chips(185,585,110,34); chips(112,605,135,130); chips(0,768,208,58); chips(66,580,14,40); chips(264,745,16,45);
qfn(215,185,32,30,1,1); qfn(208,245,28,34,1,1); qfn(262,242,28,28,1,1); qfn(300,142,26,44,2,3); qfn(160,115,36,26,2,2);
bga(220,340,52,52,.6); bga(262,510,48,64,.7); bga(148,617,76,72,.8); bga(72,785,38,36,.9); qfn(196,408,36,40,1,1);
each([[180,362,26,34],[180,335,26,18],[278,345,30,22],[184,692,32,34],[218,692,26,36],[152,694,30,26],[12,790,26,32],[40,790,26,32],[112,790,26,32],[140,790,28,32],[250,600,14,24]], (x, y, w, h) => cap(x, y, w, h));
each([[20,33,30,14],[152,33,30,14],[282,30,30,15],[63,63,13,28],[90,63,14,28],[68,122,14,30],[96,122,14,30],[370,192,18,28],[363,285,18,26],[310,768,14,20]], (x, y, w, h) => pad(x, y, w, h));
each([[0,68,26,22],[120,63,14,28],[172,68,16,26],[295,108,26,20],[348,240,26,20],[315,410,26,20],[262,655,20,28],[234,755,20,28],[78,183,18,26]], (x, y, w, h) => pad(x, y, w, h, "gray"));
each([[320,630],[320,663],[320,692]], (x, y) => { extra += `<rect x="${X(x) - 6}" y="${Y(y) - 3}" width="11" height="6" transform="rotate(-30 ${X(x)} ${Y(y)})" fill="${C.yellow}"/><circle cx="${X(x)}" cy="${Y(y)}" r="2" fill="${C.blue}"/>`; });
extra += `<rect x="${X(291) - 5}" y="${Y(720) - 2}" width="10" height="5" transform="rotate(20 ${X(291)} ${Y(720)})" fill="${C.gray}"/>`;
silk("170,325 310,320 315,400"); silk("172,240 176,310"); silk("170,470 300,468"); silk("235,500 235,560"); silk("265,490 345,495"); silk("110,600 110,740 240,738"); silk("205,572 235,550"); silk("295,630 345,565"); silk("250,640 275,630"); silk("0,762 205,762 210,825"); silk("0,832 205,832"); silk("90,575 90,720"); silk("168,335 168,450"); silk("350,340 350,400"); silk("330,150 332,240");
mesh("212,476 285,476", 8, 1);
each([[387,448,34,112],[420,570,80,34],[518,367,36,130],[470,510,68,34],[446,626,36,128],[384,775,78,42],[496,775,82,42],[508,638,70,36]], conn);
chips(388,560,28,16); chips(512,568,30,30); chips(420,818,30,16); chips(512,818,30,16); chips(470,770,14,30);
each([["636,383 636,512 612,514",32],["650,527 692,527",30],["767,466 767,584 610,582",32],["610,655 670,655",32],["708,645 708,770",32],["618,804 792,804",54,.5]], mesh);
each([[497,655],[562,577],[455,824],[497,824],[545,824],[70,688]], diamond);
each([[212,429],[225,618],[402,504],[462,591],[537,432],[465,690]], (x, y) => dot(x, y));
each([[277,88],[388,590],[364,778],[572,822]], (x, y) => dot(x, y, "teal"));
extra += `<text class="refdes" x="${X(184)}" y="${Y(662)}">U32</text>`;

const marks = [[703, 268], [1153, 268], [703, 668], [1153, 668]]
  .map(([x, y]) => `<text class="watermark" transform="translate(${x} ${y}) rotate(-45)" y="6" shape-rendering="auto">XZZ@XZZHK</text>`).join("");
const layer = l => order.filter(c => l[c]).map(c => `<path fill="${C[c]}" fill-rule="nonzero" d="${l[c]}"/>`).join("");
document.getElementById("board").innerHTML = marks + shapes + levels.map(layer).join("") + holes + extra;
```
